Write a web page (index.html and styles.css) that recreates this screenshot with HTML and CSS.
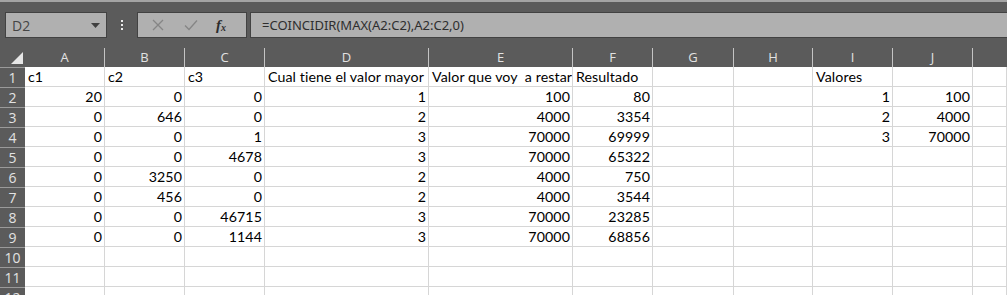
FILE: index.html
```html
<!DOCTYPE html>
<html lang="es">
<head>
    <meta charset="UTF-8">
    <title>Libro1 - Excel</title>
    <link rel="stylesheet" href="styles.css">
</head>
<body>
    <div class="topline"></div>
    <div class="toolbar">
        <div class="namebox">
            <span>D2</span>
            <svg class="caret" width="9" height="5" viewBox="0 0 9 5"><path d="M0 0h9L4.5 5z"/></svg>
        </div>
        <div class="grip"><i></i><i></i><i></i></div>
        <div class="fxbox">
            <svg class="tool" width="12" height="12" viewBox="0 0 12 12"><path d="M1 1l10 10M11 1L1 11"/></svg>
            <svg class="tool" width="14" height="12" viewBox="0 0 14 12"><path d="M1 6.5l4 4L13 1.5"/></svg>
            <span class="fx">f<sub>x</sub></span>
        </div>
        <div class="formula">=COINCIDIR(MAX(A2:C2),A2:C2,0)</div>
    </div>

    <div class="sheet">
        <div class="row head">
            <div class="corner"><span class="tri"></span></div>
            <div class="ch">A</div><div class="ch">B</div><div class="ch">C</div><div class="ch">D</div>
            <div class="ch">E</div><div class="ch">F</div><div class="ch">G</div><div class="ch">H</div>
            <div class="ch">I</div><div class="ch">J</div><div class="ch last"></div>
        </div>
        <div class="row">
            <div class="rh">1</div>
            <div class="c">c1</div><div class="c">c2</div><div class="c">c3</div>
            <div class="c">Cual tiene el valor mayor</div><div class="c">Valor que voy  a restar</div><div class="c">Resultado</div>
            <div class="c"></div><div class="c"></div><div class="c">Valores</div><div class="c"></div><div class="c"></div>
        </div>
        <div class="row">
            <div class="rh">2</div>
            <div class="c n">20</div><div class="c n">0</div><div class="c n">0</div>
            <div class="c n">1</div><div class="c n">100</div><div class="c n">80</div>
            <div class="c"></div><div class="c"></div><div class="c n">1</div><div class="c n">100</div><div class="c"></div>
        </div>
        <div class="row">
            <div class="rh">3</div>
            <div class="c n">0</div><div class="c n">646</div><div class="c n">0</div>
            <div class="c n">2</div><div class="c n">4000</div><div class="c n">3354</div>
            <div class="c"></div><div class="c"></div><div class="c n">2</div><div class="c n">4000</div><div class="c"></div>
        </div>
        <div class="row">
            <div class="rh">4</div>
            <div class="c n">0</div><div class="c n">0</div><div class="c n">1</div>
            <div class="c n">3</div><div class="c n">70000</div><div class="c n">69999</div>
            <div class="c"></div><div class="c"></div><div class="c n">3</div><div class="c n">70000</div><div class="c"></div>
        </div>
        <div class="row">
            <div class="rh">5</div>
            <div class="c n">0</div><div class="c n">0</div><div class="c n">4678</div>
            <div class="c n">3</div><div class="c n">70000</div><div class="c n">65322</div>
            <div class="c"></div><div class="c"></div><div class="c"></div><div class="c"></div><div class="c"></div>
        </div>
        <div class="row">
            <div class="rh">6</div>
            <div class="c n">0</div><div class="c n">3250</div><div class="c n">0</div>
            <div class="c n">2</div><div class="c n">4000</div><div class="c n">750</div>
            <div class="c"></div><div class="c"></div><div class="c"></div><div class="c"></div><div class="c"></div>
        </div>
        <div class="row">
            <div class="rh">7</div>
            <div class="c n">0</div><div class="c n">456</div><div class="c n">0</div>
            <div class="c n">2</div><div class="c n">4000</div><div class="c n">3544</div>
            <div class="c"></div><div class="c"></div><div class="c"></div><div class="c"></div><div class="c"></div>
        </div>
        <div class="row">
            <div class="rh">8</div>
            <div class="c n">0</div><div class="c n">0</div><div class="c n">46715</div>
            <div class="c n">3</div><div class="c n">70000</div><div class="c n">23285</div>
            <div class="c"></div><div class="c"></div><div class="c"></div><div class="c"></div><div class="c"></div>
        </div>
        <div class="row">
            <div class="rh">9</div>
            <div class="c n">0</div><div class="c n">0</div><div class="c n">1144</div>
            <div class="c n">3</div><div class="c n">70000</div><div class="c n">68856</div>
            <div class="c"></div><div class="c"></div><div class="c"></div><div class="c"></div><div class="c"></div>
        </div>
        <div class="row">
            <div class="rh">10</div>
            <div class="c"></div><div class="c"></div><div class="c"></div><div class="c"></div><div class="c"></div><div class="c"></div>
            <div class="c"></div><div class="c"></div><div class="c"></div><div class="c"></div><div class="c"></div>
        </div>
        <div class="row">
            <div class="rh">11</div>
            <div class="c"></div><div class="c"></div><div class="c"></div><div class="c"></div><div class="c"></div><div class="c"></div>
            <div class="c"></div><div class="c"></div><div class="c"></div><div class="c"></div><div class="c"></div>
        </div>
        <div class="row">
            <div class="rh">12</div>
            <div class="c"></div><div class="c"></div><div class="c"></div><div class="c"></div><div class="c"></div><div class="c"></div>
            <div class="c"></div><div class="c"></div><div class="c"></div><div class="c"></div><div class="c"></div>
        </div>
    </div>
</body>
</html>
```

FILE: styles.css
```css
body {
    margin: 0;
    background-color: #5b5b5b;
    font-family: "Open Sans", "Noto Sans", sans-serif;
    overflow: hidden;
}
.topline {
    height: 2px;
    background-color: #a4a4a4;
}
.toolbar {
    display: flex;
    align-items: center;
    padding: 10px 0 9px 5px;
}
.namebox,
.fxbox,
.formula {
    box-sizing: border-box;
    height: 26px;
    background-color: #b0b0b0;
    border: 1px solid #424242;
}
.namebox {
    width: 102px;
    display: flex;
    align-items: center;
    justify-content: space-between;
    padding: 0 6px 0 6px;
    color: #454545;
    font-size: 14px;
}
.caret {
    fill: #404040;
}
.grip {
    width: 30px;
    display: flex;
    flex-direction: column;
    align-items: center;
    gap: 2px;
}
.grip i {
    width: 2px;
    height: 2px;
    background-color: #ececec;
}
.fxbox {
    width: 110px;
    display: flex;
    align-items: center;
    padding-left: 14px;
    gap: 20px;
}
.tool {
    fill: none;
    stroke: #858585;
    stroke-width: 1.3;
}
.fx {
    font-family: "Liberation Serif", serif;
    font-style: italic;
    font-weight: bold;
    font-size: 15px;
    color: #2c2c2c;
    margin-left: -2px;
}
.fx sub {
    font-size: 10px;
    vertical-align: -1px;
}
.formula {
    flex: 1;
    margin-left: 3px;
    margin-right: -2px;
    padding-left: 11px;
    line-height: 24px;
    color: #2e2e2e;
    font-size: 13px;
    font-family: "Noto Sans", sans-serif;
}

.sheet {
    display: grid;
    grid-template-columns: 25px 80px 80px 80px 164px 144px 80px 81px 79px 80px 80px 1fr;
    grid-auto-rows: 20px;
}
.row {
    display: contents;
}
.corner {
    position: relative;
}
.tri {
    position: absolute;
    right: 2px;
    bottom: 3px;
    width: 0;
    height: 0;
    border-left: 12px solid transparent;
    border-bottom: 12px solid #e6e6e6;
}
.ch {
    border-right: 1px solid #c4c4c4;
    margin-top: 1px;
    color: #e2e2e2;
    font-size: 13px;
    line-height: 19px;
    text-align: center;
}
.ch.last {
    border-right: none;
}
.rh {
    box-sizing: border-box;
    border-top: 1px solid #9a9a9a;
    color: #e2e2e2;
    font-size: 14px;
    line-height: 19px;
    text-align: center;
}
.c {
    box-sizing: border-box;
    background-color: #ffffff;
    border-right: 1px solid #d6d6d6;
    border-bottom: 1px solid #d6d6d6;
    padding: 0 2px 0 3px;
    color: #000000;
    font-family: "Lato", sans-serif;
    font-size: 14.2px;
    letter-spacing: 0.1px;
    line-height: 20px;
    white-space: pre;
    overflow: hidden;
}
.n {
    text-align: right;
}
```
